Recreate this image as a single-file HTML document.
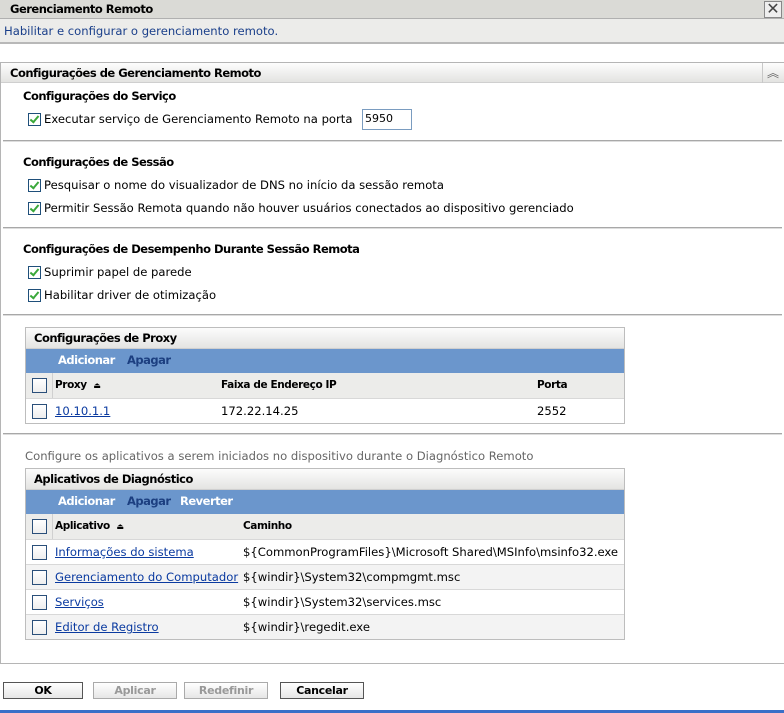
<!DOCTYPE html>
<html><head><meta charset="utf-8"><style>
*{margin:0;padding:0;box-sizing:border-box}
body{width:784px;height:713px;position:relative;background:#fff;font-family:"DejaVu Sans","Liberation Sans",sans-serif;font-size:11.6px;color:#000;overflow:hidden}
.a{position:absolute;white-space:nowrap}
.b{font-weight:bold;letter-spacing:-0.5px;font-size:11.5px}
.h{font-weight:bold;letter-spacing:-0.4px;font-size:10.5px}
.hr{position:absolute;left:3px;width:779px;height:2px;background:#a8a8a8;border-bottom:1px solid #ddd}
.cb{position:absolute;width:13px;height:13px;border:1px solid #1f4f7a;background:#fff}
.cb.k::after{content:"";position:absolute;left:3px;top:0px;width:3px;height:7px;border:solid #3aa83a;border-width:0 2px 2px 0;transform:rotate(40deg)}
.ub{position:absolute;width:15px;height:15px;border:1px solid #2a4f7a;background:linear-gradient(#fff,#eee)}
a{color:#0a3aa0;text-decoration:underline}
.box{position:absolute;left:25px;width:600px;border:1px solid #bdbdbd}
.bh{height:21px;background:linear-gradient(#fcfcfc,#e4e4e2);border-bottom:1px solid #cfcfcf;position:relative}
.bar{height:24px;background:#6b96cc;position:relative;font-weight:bold;font-size:11.5px;letter-spacing:-0.5px;color:#fff}
.row{height:25px;position:relative;border-top:1px solid #d8d8d8}
.btn{position:absolute;top:682px;height:17px;border:1px solid #555;background:linear-gradient(#fff,#e6e6e6);text-align:center;font-weight:bold;font-size:11px;letter-spacing:-0.3px;line-height:15px}
.btn.d{border-color:#aaa;color:#999}
</style></head><body>
<div class="a" style="left:0;top:0;width:784px;height:19px;background:#dadad6;border-bottom:1px solid #b0b0b0"></div>
<div class="a b" style="left:10px;top:2px">Gerenciamento Remoto</div>
<div class="a" style="left:764px;top:1px;width:18px;height:17px;border:1px solid #888;background:#eee;font-size:16px;line-height:14px;text-align:center;color:#444">✕</div>
<div class="a" style="left:0;top:19px;width:784px;height:25px;background:#ececea;border-bottom:2px solid #b8b8b8"></div>
<div class="a" style="left:4px;top:24px;color:#1a3f8a">Habilitar e configurar o gerenciamento remoto.</div>

<div class="a" style="left:0;top:62px;width:784px;height:602px;border-left:1px solid #b5b5b5;border-top:1px solid #b5b5b5;border-bottom:1px solid #b5b5b5"></div>
<div class="a" style="left:1px;top:63px;width:783px;height:20px;background:linear-gradient(#fdfdfd,#e3e3e1);border-bottom:1px solid #cfcfcf"></div>
<div class="a" style="left:762px;top:63px;width:1px;height:20px;background:#c8c8c8"></div>
<div class="a" style="left:767px;top:64px;font-size:12px;color:#666">︽</div>
<div class="a b" style="left:10px;top:66px">Configurações de Gerenciamento Remoto</div>

<div class="a b" style="left:23px;top:89px">Configurações do Serviço</div>
<div class="cb k" style="left:28px;top:113px"></div>
<div class="a" style="left:44px;top:112px">Executar serviço de Gerenciamento Remoto na porta</div>
<div class="a" style="left:362px;top:109px;width:50px;height:21px;border:1px solid #7a9cc0;padding:2px 2px;font-size:11px">5950</div>
<div class="hr" style="top:140px"></div>

<div class="a b" style="left:23px;top:155px">Configurações de Sessão</div>
<div class="cb k" style="left:28px;top:179px"></div>
<div class="a" style="left:44px;top:178px">Pesquisar o nome do visualizador de DNS no início da sessão remota</div>
<div class="cb k" style="left:28px;top:202px"></div>
<div class="a" style="left:44px;top:201px">Permitir Sessão Remota quando não houver usuários conectados ao dispositivo gerenciado</div>
<div class="hr" style="top:227px"></div>

<div class="a b" style="left:23px;top:242px">Configurações de Desempenho Durante Sessão Remota</div>
<div class="cb k" style="left:28px;top:266px"></div>
<div class="a" style="left:44px;top:265px">Suprimir papel de parede</div>
<div class="cb k" style="left:28px;top:289px"></div>
<div class="a" style="left:44px;top:288px">Habilitar driver de otimização</div>
<div class="hr" style="top:314px"></div>

<div class="box" style="top:327px">
 <div class="bh"><span class="a b" style="left:8px;top:3px">Configurações de Proxy</span></div>
 <div class="bar"><span class="a" style="left:32px;top:4px">Adicionar</span><span class="a" style="left:101px;top:4px;color:#1c3f80">Apagar</span></div>
 <div class="row" style="background:#ececea;border-top:none"><div class="ub" style="left:6px;top:5px"></div><div class="a" style="left:26px;top:0;width:1px;height:25px;background:#d0d0d0"></div>
  <span class="a h" style="left:29px;top:6px">Proxy&nbsp;&nbsp;<span style="font-size:8px">⏏</span></span><span class="a h" style="left:195px;top:6px">Faixa de Endereço IP</span><span class="a h" style="left:511px;top:6px">Porta</span></div>
 <div class="row"><div class="ub" style="left:6px;top:5px"></div><a class="a" style="left:29px;top:5px">10.10.1.1</a><span class="a" style="left:195px;top:5px">172.22.14.25</span><span class="a" style="left:511px;top:5px">2552</span></div>
</div>
<div class="hr" style="top:433px"></div>
<div class="a" style="left:25px;top:449px;color:#666">Configure os aplicativos a serem iniciados no dispositivo durante o Diagnóstico Remoto</div>

<div class="box" style="top:468px">
 <div class="bh"><span class="a b" style="left:8px;top:3px">Aplicativos de Diagnóstico</span></div>
 <div class="bar"><span class="a" style="left:32px;top:4px">Adicionar</span><span class="a" style="left:101px;top:4px;color:#1c3f80">Apagar</span><span class="a" style="left:154px;top:4px">Reverter</span></div>
 <div class="row" style="background:#ececea;border-top:none"><div class="ub" style="left:6px;top:5px"></div><div class="a" style="left:26px;top:0;width:1px;height:25px;background:#d0d0d0"></div>
  <span class="a h" style="left:29px;top:6px">Aplicativo&nbsp;&nbsp;<span style="font-size:8px">⏏</span></span><span class="a h" style="left:217px;top:6px">Caminho</span></div>
 <div class="row"><div class="ub" style="left:6px;top:5px"></div><a class="a" style="left:29px;top:5px">Informações do sistema</a><span class="a" style="left:217px;top:5px">${CommonProgramFiles}\Microsoft Shared\MSInfo\msinfo32.exe</span></div>
 <div class="row" style="background:#f3f3f3"><div class="ub" style="left:6px;top:5px"></div><a class="a" style="left:29px;top:5px">Gerenciamento do Computador</a><span class="a" style="left:217px;top:5px">${windir}\System32\compmgmt.msc</span></div>
 <div class="row"><div class="ub" style="left:6px;top:5px"></div><a class="a" style="left:29px;top:5px">Serviços</a><span class="a" style="left:217px;top:5px">${windir}\System32\services.msc</span></div>
 <div class="row" style="background:#f3f3f3"><div class="ub" style="left:6px;top:5px"></div><a class="a" style="left:29px;top:5px">Editor de Registro</a><span class="a" style="left:217px;top:5px">${windir}\regedit.exe</span></div>
</div>

<div class="btn" style="left:3px;width:80px">OK</div>
<div class="btn d" style="left:93px;width:84px">Aplicar</div>
<div class="btn d" style="left:184px;width:84px">Redefinir</div>
<div class="btn" style="left:280px;width:84px">Cancelar</div>
<div class="a" style="left:0;top:710px;width:784px;height:3px;background:#3a6fc8"></div>
</body></html>
